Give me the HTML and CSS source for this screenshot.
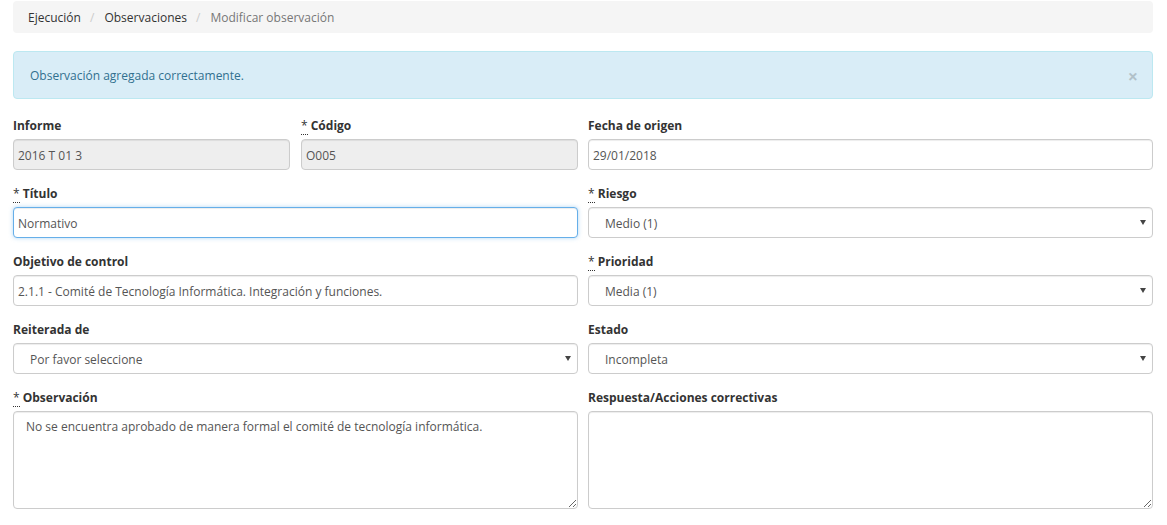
FILE: index.html
```html
<!DOCTYPE html>
<html lang="es">
<head>
<meta charset="utf-8">
<title>Modificar observación</title>
<link rel="stylesheet" href="styles.css">
</head>
<body>
<div class="page">
  <ol class="breadcrumb">
    <li><a href="#">Ejecución</a></li>
    <li><a href="#">Observaciones</a></li>
    <li class="active">Modificar observación</li>
  </ol>

  <div class="alert">
    <span>Observación agregada correctamente.</span>
    <button class="close" type="button">×</button>
  </div>

  <form class="form">
    <div class="row">
      <div class="split">
        <div class="group">
          <label>Informe</label>
          <input class="control" type="text" value="2016 T 01 3" disabled>
        </div>
        <div class="group">
          <label><abbr title="Requerido">*</abbr> Código</label>
          <input class="control" type="text" value="O005" disabled>
        </div>
      </div>
      <div class="group">
        <label>Fecha de origen</label>
        <input class="control" type="text" value="29/01/2018">
      </div>
    </div>

    <div class="row">
      <div class="group">
        <label><abbr title="Requerido">*</abbr> Título</label>
        <input class="control focus" type="text" value="Normativo">
      </div>
      <div class="group">
        <label><abbr title="Requerido">*</abbr> Riesgo</label>
        <div class="select-wrap">
          <select class="control select"><option>Medio (1)</option></select>
        </div>
      </div>
    </div>

    <div class="row">
      <div class="group">
        <label>Objetivo de control</label>
        <input class="control" type="text" value="2.1.1 - Comité de Tecnología Informática. Integración y funciones.">
      </div>
      <div class="group">
        <label><abbr title="Requerido">*</abbr> Prioridad</label>
        <div class="select-wrap">
          <select class="control select"><option>Media (1)</option></select>
        </div>
      </div>
    </div>

    <div class="row">
      <div class="group">
        <label>Reiterada de</label>
        <div class="select-wrap">
          <select class="control select"><option>Por favor seleccione</option></select>
        </div>
      </div>
      <div class="group">
        <label>Estado</label>
        <div class="select-wrap">
          <select class="control select"><option>Incompleta</option></select>
        </div>
      </div>
    </div>

    <div class="row">
      <div class="group">
        <label><abbr title="Requerido">*</abbr> Observación</label>
        <textarea class="control area">No se encuentra aprobado de manera formal el comité de tecnología informática.</textarea>
      </div>
      <div class="group">
        <label>Respuesta/Acciones correctivas</label>
        <textarea class="control area"></textarea>
      </div>
    </div>
  </form>
</div>
</body>
</html>
```

FILE: styles.css
```css
* { box-sizing: border-box; }

html, body {
  margin: 0;
  padding: 0;
  background: #fff;
}

body {
  font-family: "Open Sans", "Liberation Sans", sans-serif;
  font-size: 12px;
  line-height: 18px;
  color: #333;
}

.page {
  padding: 1px 14px 0 13px;
}

/* breadcrumb */
.breadcrumb {
  list-style: none;
  margin: 0;
  padding: 8px 15px 6px;
  height: 32px;
  background: #f5f5f5;
  border-radius: 4px;
  display: flex;
}

.breadcrumb li + li::before {
  content: "/\00a0";
  padding: 0 7px 0 9px;
  color: #ccc;
}

.breadcrumb a {
  color: #333;
  text-decoration: none;
}

.breadcrumb .active {
  color: #777;
}

/* alert */
.alert {
  margin-top: 18px;
  margin-bottom: 18px;
  height: 48px;
  padding: 15px 15px 13px 16px;
  background: #d9edf7;
  border: 1px solid #bce8f1;
  border-radius: 4px;
  color: #31708f;
  display: flex;
  align-items: center;
}

.close {
  margin-left: auto;
  margin-right: -1px;
  padding: 0;
  border: 0;
  background: transparent;
  font-family: "Open Sans", "Liberation Sans", sans-serif;
  font-size: 18px;
  font-weight: bold;
  line-height: 18px;
  color: #000;
  opacity: .18;
  cursor: pointer;
}

/* form */
.row {
  display: grid;
  grid-template-columns: 1fr 1fr;
  column-gap: 10px;
}

.split {
  display: grid;
  grid-template-columns: 1fr 1fr;
  column-gap: 11px;
}

.group {
  margin-bottom: 15px;
  min-width: 0;
}

label {
  display: block;
  font-weight: bold;
  margin-bottom: 4px;
  height: 18px;
  line-height: 17px;
}

abbr[title] {
  text-decoration: none;
  border-bottom: 1px dotted #333;
  cursor: help;
  font-weight: normal;
}

.control {
  display: block;
  width: 100%;
  height: 31px;
  padding: 6px 4px 4px;
  font-family: "Open Sans", "Liberation Sans", sans-serif;
  font-size: 12px;
  line-height: 18px;
  color: #555;
  background: #fff;
  border: 1px solid #ccc;
  border-radius: 4px;
  box-shadow: inset 0 1px 1px rgba(0, 0, 0, .075);
  outline: none;
}

.control:disabled {
  background: #eee;
  color: #555;
  opacity: 1;
}

.focus {
  border-color: #66afe9;
  box-shadow: inset 0 1px 1px rgba(0, 0, 0, .075), 0 0 4px rgba(102, 175, 233, .5);
}

.select-wrap {
  position: relative;
}

.select-wrap::after {
  content: "";
  position: absolute;
  right: 7px;
  top: 13px;
  border-left: 3px solid transparent;
  border-right: 3px solid transparent;
  border-top: 5px solid #444;
  pointer-events: none;
}

.select {
  appearance: none;
  -webkit-appearance: none;
  padding: 6px 24px 4px 16px;
}

.area {
  height: 98px;
  padding: 6px 12px;
  resize: vertical;
}
```
